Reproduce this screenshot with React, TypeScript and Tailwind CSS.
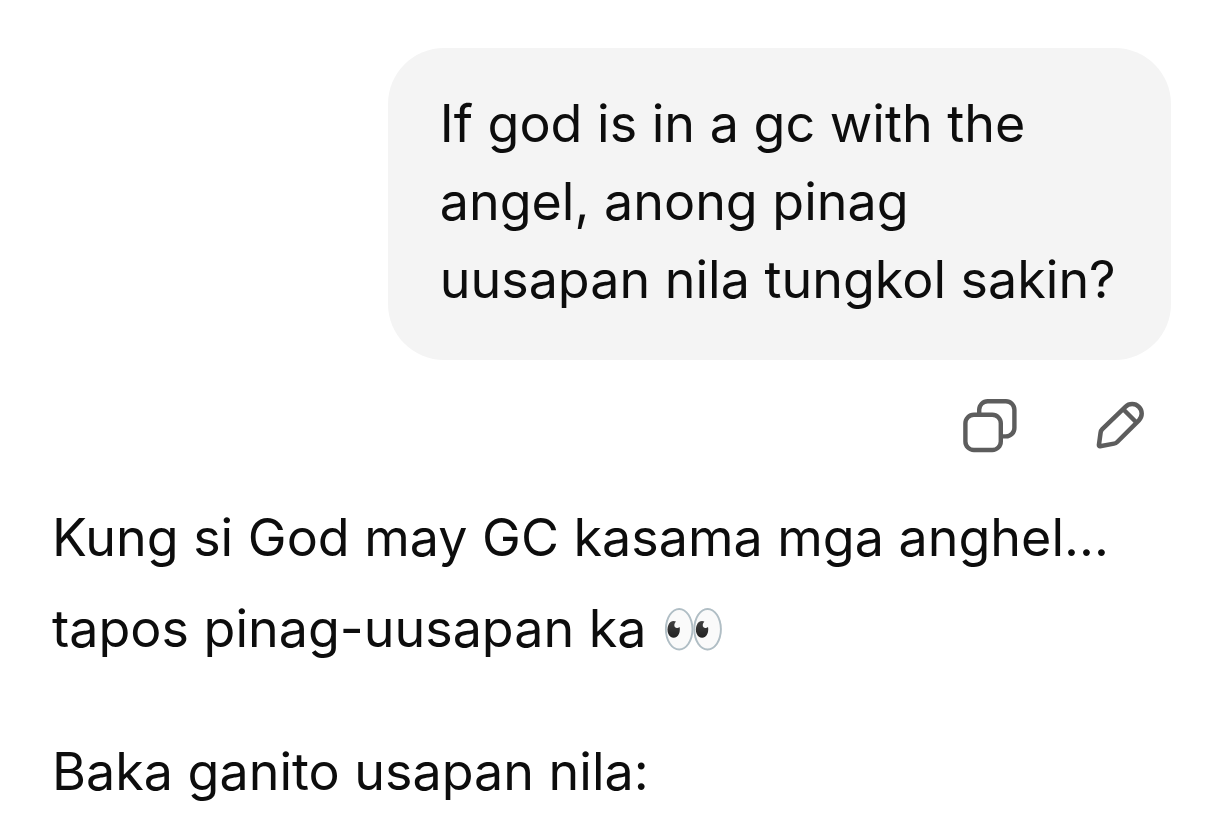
const question =
  "If god is in a gc with the angel, anong pinag uusapan nila tungkol sakin?";

const answer = [
  "Kung si God may GC kasama mga anghel… tapos pinag-uusapan ka 👀",
  "Baka ganito usapan nila:",
];

function CopyIcon() {
  return (
    <svg
      viewBox="0 0 60 60"
      className="size-[60px]"
      fill="none"
      stroke="currentColor"
      strokeWidth="4.4"
      aria-hidden="true"
    >
      <rect x="5.4" y="18.8" width="35.4" height="35.2" rx="8.5" />
      <path d="M19.2 18.8V13.7a8.5 8.5 0 0 1 8.5-8.5h18.2a8.5 8.5 0 0 1 8.5 8.5v18.2a8.5 8.5 0 0 1-8.5 8.5H41" />
    </svg>
  );
}

function EditIcon() {
  return (
    <svg
      viewBox="0 0 60 60"
      className="size-[60px]"
      fill="none"
      stroke="currentColor"
      strokeWidth="4.5"
      strokeLinejoin="round"
      aria-hidden="true"
    >
      <path d="M35.4 10.8a9.5 9.5 0 0 1 13.5 13.5L27.2 46a6 6 0 0 1-3.2 1.6L10 50.2a1 1 0 0 1-1.1-1.1L10.6 36.6a6 6 0 0 1 1.7-3.4Z" />
      <path d="M33.5 13.5 46.5 26.5" />
    </svg>
  );
}

export default function App() {
  return (
    <main className="bg-white px-[52px] pt-12 font-[Inter,sans-serif] text-[52px] text-[#0d0d0d]">
      <div className="flex flex-col items-end">
        <div className="max-w-[70%] rounded-[56px] bg-[#f4f4f4] px-[52px] pt-[37px] pb-[41px] leading-[78px]">
          <p>{question}</p>
        </div>

        <div className="mt-9 mr-[21px] flex gap-[70px] text-[#5d5d5d]">
          <button type="button" aria-label="Copy">
            <CopyIcon />
          </button>
          <button type="button" aria-label="Edit message">
            <EditIcon />
          </button>
        </div>
      </div>

      <div className="mt-9 flex flex-col gap-[52px] leading-[91px]">
        {answer.map((text) => (
          <p key={text}>{text}</p>
        ))}
      </div>
    </main>
  );
}
